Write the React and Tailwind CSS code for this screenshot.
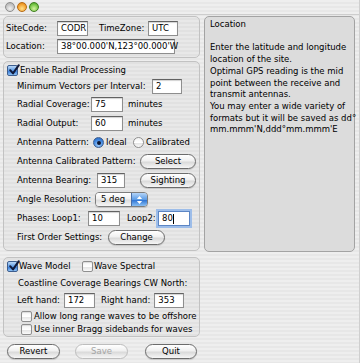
import React from 'react';

const Field = ({ w, children, focused }) => (
  <div
    className={`${w} h-[15px] shrink-0 bg-white flex items-center px-[3px] border ${
      focused
        ? 'border-[#5d86c4] shadow-[0_0_0_2px_#9dbde9]'
        : 'border-[#8e8e8e] border-t-[#626262] shadow-[inset_0_1px_1px_rgba(0,0,0,0.18)]'
    }`}
  >
    {children}
    {focused && <span className="w-px h-[10px] bg-black" />}
  </div>
);

const Check = ({ checked }) =>
  checked ? (
    <div className="relative w-[11px] h-[11px] shrink-0 rounded-[2px] border border-[#3d5e8f] bg-[linear-gradient(#b9d7f7,#5f9de6_50%,#3479d8_55%,#8ec2f5)]">
      <svg viewBox="0 0 12 12" className="absolute -top-[2px] left-0 w-[12px] h-[12px]">
        <path d="M2.2 6.2 L5 9.4 L10.8 1.2" fill="none" stroke="#111a3a" strokeWidth="2" strokeLinecap="round" strokeLinejoin="round" />
      </svg>
    </div>
  ) : (
    <div className="w-[11px] h-[11px] shrink-0 rounded-[2px] border border-[#8f8f8f] bg-[linear-gradient(#f4f4f4,#ffffff_50%,#e4e4e4_55%,#fafafa)] shadow-[inset_0_1px_1px_rgba(0,0,0,0.1)]" />
  );

const Radio = ({ on }) =>
  on ? (
    <div className="w-[11px] h-[11px] shrink-0 rounded-full border border-[#3d5e8f] bg-[radial-gradient(circle_at_50%_75%,#a9d1fb,#3c84de_60%,#2a63b8)] flex items-center justify-center">
      <div className="w-[4px] h-[4px] rounded-full bg-[#0d1733]" />
    </div>
  ) : (
    <div className="w-[11px] h-[11px] shrink-0 rounded-full border border-[#8f8f8f] bg-[linear-gradient(#f2f2f2,#ffffff_50%,#e2e2e2_55%,#fafafa)]" />
  );

const Button = ({ w, children, disabled }) => (
  <div
    className={`${w} h-[15px] shrink-0 rounded-full border flex items-center justify-center bg-[linear-gradient(#ffffff,#f0f0f0_45%,#dadada_55%,#f6f6f6)] ${
      disabled ? 'border-[#bdbdbd] text-[#a5a5a5]' : 'border-[#6c6c6c] text-black shadow-[0_1px_1px_rgba(0,0,0,0.15)]'
    }`}
  >
    {children}
  </div>
);

const Light = ({ color }) => (
  <div className={`w-[10px] h-[10px] rounded-full border ${color}`} />
);

export default function App() {
  return (
    <div className="w-[360px] h-[363px] overflow-hidden whitespace-nowrap text-black font-['DejaVu_Sans',sans-serif] text-[8.5px] leading-none bg-[repeating-linear-gradient(to_bottom,#eeeeee_0px,#eeeeee_2px,#e7e7e7_2px,#e7e7e7_4px)] border-r border-[#cfcfcf]">
      {/* Title bar */}
      <div className="h-[15px] flex items-center pl-[5px] gap-[2px] border-b border-[#cdcdcd]">
        <Light color="border-[#8e8e8e] bg-[radial-gradient(circle_at_50%_70%,#f2f2f2,#bcbcbc_70%,#9c9c9c)]" />
        <Light color="border-[#b86a12] bg-[radial-gradient(circle_at_50%_70%,#ffe08a,#f3a331_60%,#d27810)]" />
        <Light color="border-[#3f7f1f] bg-[radial-gradient(circle_at_50%_70%,#d4f3a0,#76c545_60%,#3f9422)]" />
      </div>

      <div className="flex pl-[3px] pt-[1px] gap-[4px]">
        {/* Left column */}
        <div className="w-[197px] flex flex-col">
          <div className="h-[42px] rounded-[5px] border border-[#c2c2c2] bg-[#00000006] pl-[2px] pt-[4px] flex flex-col gap-[3px]">
            <div className="flex items-center h-[15px]">
              <span className="w-[51px] shrink-0">SiteCode:</span>
              <Field w="w-[31px]">CODR</Field>
              <span className="ml-[11px] w-[49px] shrink-0">TimeZone:</span>
              <Field w="w-[30px]">UTC</Field>
            </div>
            <div className="flex items-center h-[15px]">
              <span className="w-[51px] shrink-0">Location:</span>
              <Field w="w-[118px]">38°00.000'N,123°00.000'W</Field>
            </div>
          </div>

          <div className="mt-[3px] h-[190px] rounded-[5px] border border-[#c2c2c2] bg-[#00000006] pl-[3px] flex flex-col">
            <div className="mt-[2px] h-[12px] flex items-center">
              <Check checked />
              <span className="ml-[2px]">Enable Radial Processing</span>
            </div>
            <div className="mt-[3px] h-[15px] flex items-center pl-[10px]">
              <span className="w-[135px] shrink-0">Minimum Vectors per Interval:</span>
              <Field w="w-[30px]">2</Field>
            </div>
            <div className="mt-[3px] h-[15px] flex items-center pl-[10px]">
              <span className="w-[74px] shrink-0">Radial Coverage:</span>
              <Field w="w-[32px]">75</Field>
              <span className="ml-[5px]">minutes</span>
            </div>
            <div className="mt-[4px] h-[15px] flex items-center pl-[10px]">
              <span className="w-[74px] shrink-0">Radial Output:</span>
              <Field w="w-[32px]">60</Field>
              <span className="ml-[5px]">minutes</span>
            </div>
            <div className="mt-[4px] h-[15px] flex items-center pl-[10px]">
              <span className="w-[76px] shrink-0">Antenna Pattern:</span>
              <Radio on />
              <span className="ml-[2px] w-[27px] shrink-0">Ideal</span>
              <Radio />
              <span className="ml-[2px]">Calibrated</span>
            </div>
            <div className="mt-[4px] h-[15px] flex items-center pl-[10px]">
              <span className="w-[123px] shrink-0">Antenna Calibrated Pattern:</span>
              <Button w="w-[56px]">Select</Button>
            </div>
            <div className="mt-[4px] h-[15px] flex items-center pl-[10px]">
              <span className="w-[80px] shrink-0">Antenna Bearing:</span>
              <Field w="w-[28px]">315</Field>
              <div className="ml-[15px]">
                <Button w="w-[56px]">Sighting</Button>
              </div>
            </div>
            <div className="mt-[4px] h-[15px] flex items-center pl-[10px]">
              <span className="w-[78px] shrink-0">Angle Resolution:</span>
              <div className="w-[53px] h-[15px] flex rounded-[4px] border border-[#7d7d7d] overflow-hidden shadow-[0_1px_1px_rgba(0,0,0,0.15)]">
                <div className="flex-1 flex items-center pl-[5px] bg-[linear-gradient(#ffffff,#f0f0f0_45%,#dcdcdc_55%,#f6f6f6)]">5 deg</div>
                <div className="w-[16px] flex items-center justify-center border-l border-[#4a6fa8] bg-[linear-gradient(#b4d4f8,#5c9ce6_50%,#2f74d4_55%,#8ac0f4)]">
                  <svg viewBox="0 0 8 11" className="w-[7px] h-[10px]">
                    <path d="M4 0.8 L7 4.3 H1 Z M4 10.2 L7 6.7 H1 Z" fill="#ffffff" />
                  </svg>
                </div>
              </div>
            </div>
            <div className="mt-[4px] h-[15px] flex items-center pl-[10px]">
              <span className="w-[35px] shrink-0">Phases:</span>
              <span className="w-[36px] shrink-0">Loop1:</span>
              <Field w="w-[32px]">10</Field>
              <span className="ml-[7px] w-[31px] shrink-0">Loop2:</span>
              <Field w="w-[32px]" focused>80</Field>
            </div>
            <div className="mt-[4px] h-[15px] flex items-center pl-[10px]">
              <span className="w-[91px] shrink-0">First Order Settings:</span>
              <Button w="w-[57px]">Change</Button>
            </div>
          </div>

          <div className="mt-[6px] h-[80px] rounded-[5px] border border-[#c2c2c2] bg-[#00000006] pl-[3px] flex flex-col">
            <div className="mt-[3px] h-[11px] flex items-center">
              <Check checked />
              <span className="ml-[1px] w-[63px] shrink-0">Wave Model</span>
              <Check />
              <span className="ml-[1px]">Wave Spectral</span>
            </div>
            <div className="mt-[5px] h-[12px] flex items-center pl-[11px]">Coastline Coverage Bearings CW North:</div>
            <div className="mt-[4px] h-[15px] flex items-center pl-[10px]">
              <span className="w-[47px] shrink-0">Left hand:</span>
              <Field w="w-[31px]">172</Field>
              <span className="ml-[6px] mr-[4px] shrink-0">Right hand:</span>
              <Field w="w-[30px]">353</Field>
            </div>
            <div className="mt-[3px] h-[11px] flex items-center pl-[14px]">
              <Check />
              <span className="ml-[2px]">Allow long range waves to be offshore</span>
            </div>
            <div className="mt-[2px] h-[11px] flex items-center pl-[14px]">
              <Check />
              <span className="ml-[2px]">Use inner Bragg sidebands for waves</span>
            </div>
          </div>

          <div className="mt-[7px] flex items-center pl-[4px]">
            <Button w="w-[53px]">Revert</Button>
            <div className="ml-[15px]">
              <Button w="w-[53px]" disabled>Save</Button>
            </div>
            <div className="ml-[17px]">
              <Button w="w-[52px]">Quit</Button>
            </div>
          </div>
        </div>

        {/* Help panel */}
        <div className="w-[151px] h-[236px] rounded-[5px] border border-[#a3a3a3] bg-[#dcdcdc] pl-[5px] pt-[2px] leading-[11.7px]">
          <div>Location</div>
          <div>&nbsp;</div>
          <div>Enter the latitude and longitude</div>
          <div>location of the site.</div>
          <div>Optimal GPS reading is the mid</div>
          <div>point between the receive and</div>
          <div>transmit antennas.</div>
          <div>You may enter a wide variety of</div>
          <div>formats but it will be saved as dd°</div>
          <div>mm.mmm'N,ddd°mm.mmm'E</div>
        </div>
      </div>
    </div>
  );
}
